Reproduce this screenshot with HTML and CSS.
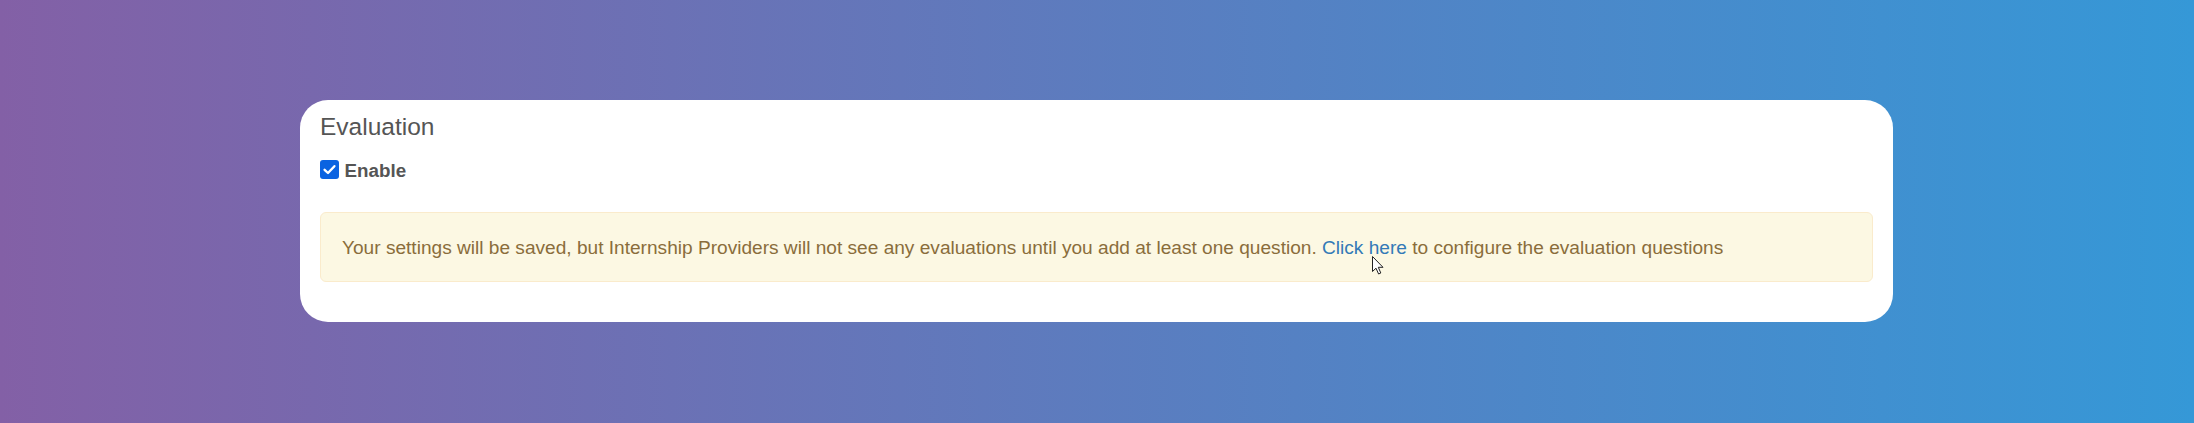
FILE: index.html
```html
<!DOCTYPE html>
<html lang="en">
<head>
<meta charset="utf-8">
<title>Evaluation</title>
<link rel="stylesheet" href="styles.css">
</head>
<body>
<main class="page">
  <section class="card">
    <h2 class="card-title">Evaluation</h2>
    <label class="check-row">
      <span class="checkbox" aria-hidden="true">
        <svg viewBox="0 0 19 19" width="19" height="19"><path d="M4.6 9.8 L8 13 L14.4 6.2" fill="none" stroke="#fff" stroke-width="2.4" stroke-linecap="round" stroke-linejoin="round"/></svg>
      </span>
      <span class="check-label">Enable</span>
    </label>
    <div class="alert">Your settings will be saved, but Internship Providers will not see any evaluations until you add at least one question. <a class="alert-link" href="#">Click here</a> to configure the evaluation questions</div>
    <svg class="cursor" viewBox="0 0 12 19" width="12" height="19" aria-hidden="true"><path d="M0.5 0.5 L0.5 15.5 L4 12.2 L6.6 18 L8.8 17 L6.3 11.3 L11 11.3 Z" fill="#fff" stroke="#222" stroke-width="1" stroke-linejoin="round"/></svg>
  </section>
</main>
</body>
</html>
```
FILE: styles.css
```css
html, body {
  margin: 0;
  padding: 0;
}
body {
  width: 2194px;
  height: 423px;
  overflow: hidden;
  background: linear-gradient(to right, #8360a6 0%, #3598d7 100%);
  font-family: "Liberation Sans", Arial, sans-serif;
}
.page {
  padding-top: 100px;
}
.card {
  position: relative;
  box-sizing: border-box;
  width: 1593px;
  margin: 0 0 0 300px;
  background: #fff;
  border-radius: 28px;
  padding: 13px 20px 40px 20px;
}
.card-title {
  margin: 0;
  font-size: 24.5px;
  line-height: 28px;
  font-weight: normal;
  color: #555;
}
.check-row {
  display: flex;
  align-items: flex-start;
  gap: 5.5px;
  margin-top: 18px;
  height: 24px;
}
.checkbox {
  width: 19px;
  height: 19px;
  border-radius: 3px;
  background: #0b63e1;
  display: block;
  flex: none;
  margin-top: 0.5px;
}
.checkbox svg {
  display: block;
}
.check-label {
  font-size: 18.8px;
  line-height: 24px;
  font-weight: bold;
  color: #555;
}
.alert {
  margin-top: 29px;
  padding: 21px 21px 20px 21px;
  border: 1px solid #faebcc;
  border-radius: 6px;
  background: #fcf8e3;
  color: #8a6d3b;
  font-size: 19.1px;
  line-height: 27px;
}
.alert-link {
  color: #337ab7;
  text-decoration: none;
}
.cursor {
  position: absolute;
  left: 1072px;
  top: 156px;
}
```
